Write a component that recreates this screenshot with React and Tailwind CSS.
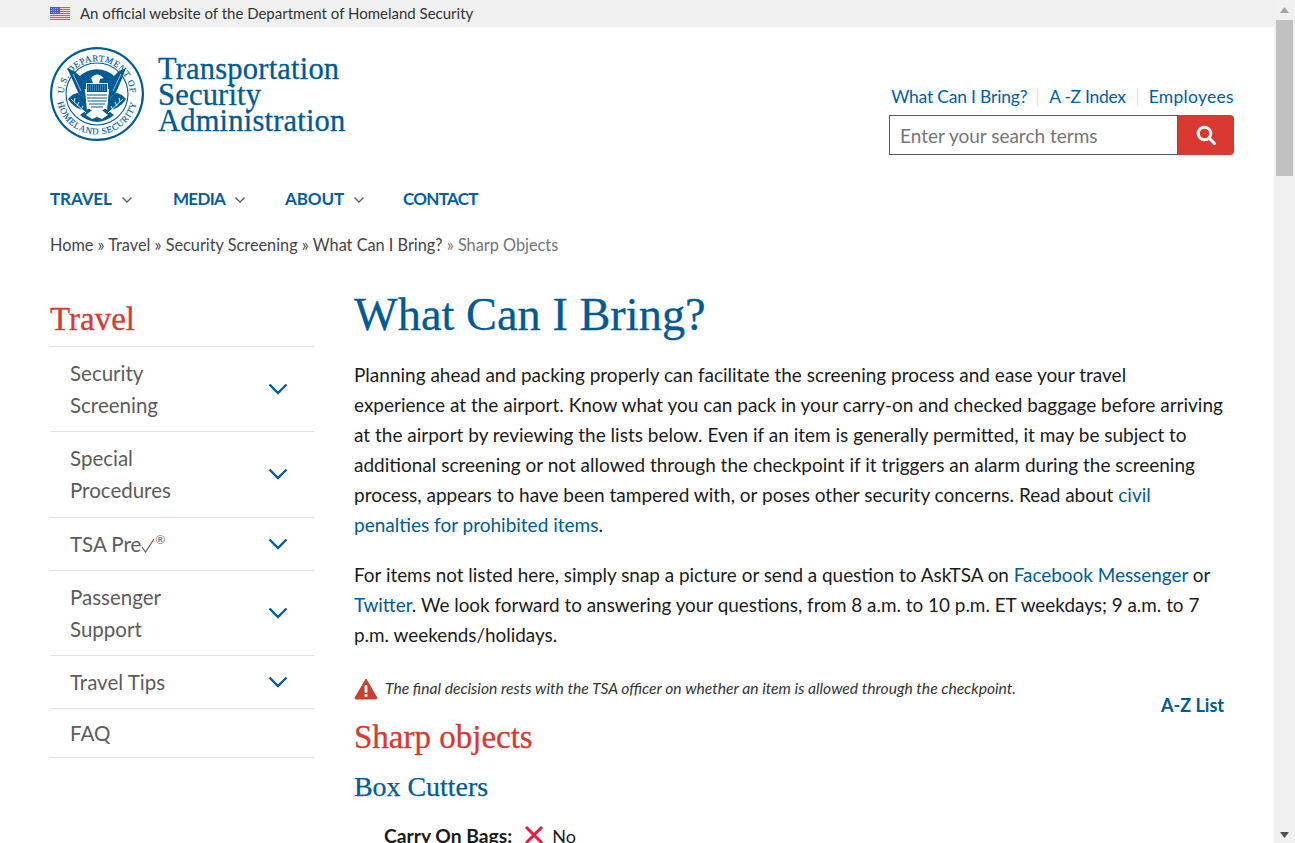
const sideItems = [
  { label: ['Security', 'Screening'], pad: 'py-[10px]' },
  { label: ['Special', 'Procedures'], pad: 'pt-[10px] pb-[11px]' },
  { label: ['TSA Pre'], pre: true, pad: 'py-[10px]' },
  { label: ['Passenger', 'Support'], pad: 'py-[10px]' },
  { label: ['Travel Tips'], pad: 'py-[10px]' },
  { label: ['FAQ'], noArrow: true, pad: 'py-[8px]' },
];

function Flag() {
  return (
    <svg width="20" height="13" viewBox="0 0 20 13" className="shrink-0">
      <rect width="20" height="13" fill="#f4d6d2" />
      {[0, 2, 4, 6, 8, 10, 12].map((y) => (
        <rect key={y} y={y} width="20" height="1" fill="#e0574c" />
      ))}
      <rect width="10" height="7" fill="#4a5cc0" />
      <path d="M1 1.5 H9 M1 3.5 H9 M1 5.5 H9" stroke="#c5cbee" strokeWidth="0.7" strokeDasharray="1 1" />
    </svg>
  );
}

function Seal() {
  return (
    <svg width="94" height="94" viewBox="0 0 94 94" className="shrink-0">
      <defs>
        <path id="sealTop" d="M 14.5 53 A 33 33 0 1 1 79.5 53" fill="none" />
        <path id="sealBottom" d="M 6.5 47 A 40.5 40.5 0 0 0 87.5 47" fill="none" />
      </defs>
      <circle cx="47" cy="47" r="47" fill="#005b94" />
      <circle cx="47" cy="47" r="44.8" fill="#fff" />
      <circle cx="47" cy="47" r="31" fill="none" stroke="#005b94" strokeWidth="1.1" />
      <text fontSize="9" fill="#005b94" stroke="#005b94" strokeWidth="0.15" fontFamily="'Liberation Serif', serif" letterSpacing="0.6" textAnchor="middle">
        <textPath href="#sealTop" startOffset="50%">U.S. DEPARTMENT OF</textPath>
      </text>
      <text fontSize="9" fill="#005b94" stroke="#005b94" strokeWidth="0.15" fontFamily="'Liberation Serif', serif" letterSpacing="0.7" textAnchor="middle">
        <textPath href="#sealBottom" startOffset="50%">HOMELAND SECURITY</textPath>
      </text>
      {/* blue field behind the eagle */}
      <path d="M29 30 A25 25 0 0 1 65 30 L62 42 H32 Z" fill="#005b94" />
      {/* wings */}
      <path d="M17 21 L24 24 L30 29 L34 36 L36 52 L29 47 L26 41 L23 34 Z" fill="#005b94" />
      <path d="M76 21 L69 24 L64 29 L60 36 L58 52 L65 47 L68 41 L71 34 Z" fill="#005b94" />
      <path d="M23 27 L31 44" stroke="#fff" strokeWidth="0.6" />
      <path d="M71 27 L63 44" stroke="#fff" strokeWidth="0.6" />
      {/* lower disk */}
      <path d="M18 52 Q23 46 28 46 L36 52 L37 65 L32 63 Q23 60 18 52 Z" fill="#005b94" />
      <path d="M76 52 Q71 46 66 46 L58 52 L57 65 L62 63 Q71 60 76 52 Z" fill="#005b94" />
      <path d="M30 68 Q47 82 64 68 L56 62 L38 62 Z" fill="#005b94" />
      {/* head */}
      <path d="M41 31 Q45 26 50 28 L54 31 L50 32 L49 36 L43 36 Z" fill="#fff" />
      {/* shield */}
      <path d="M36 36 H58 V53 Q58 62 47 67 Q36 62 36 53 Z" fill="#fff" />
      <rect x="37" y="37" width="20" height="8" fill="#005b94" />
      <path d="M38 39 H56 M38 41 H56 M38 43 H56" stroke="#fff" strokeWidth="0.5" strokeDasharray="1 1" />
      <path d="M37 48 H57 M37 51 H57 M37.5 54 H56.5 M39 57 H55 M41 60 H53" stroke="#005b94" strokeWidth="1.2" fill="none" />
      {/* olive branch and arrows */}
      <path d="M21 52 L36 66 M25 51 l-1 4 M29 55 l-2 4 M33 59 l-2 4" stroke="#fff" strokeWidth="0.9" fill="none" />
      <path d="M73 52 L58 66 M69 51 l1 4 M65 55 l2 4 M61 59 l2 4" stroke="#fff" strokeWidth="0.9" fill="none" />
      <path d="M36 68 L41 64 H53 L58 68 L52 72 L47 70 L42 72 Z" fill="#fff" />
    </svg>
  );
}

function Warning() {
  return (
    <svg width="24" height="22" viewBox="0 0 24 22" className="shrink-0">
      <path d="M12 1 L23 20 Q23 21 22 21 H2 Q1 21 1 20 Z" fill="#c9402f" stroke="#c9402f" strokeLinejoin="round" />
      <rect x="10.6" y="7" width="2.8" height="8" rx="1" fill="#fff" />
      <rect x="10.6" y="16" width="2.8" height="2.8" fill="#fff" />
    </svg>
  );
}

function Scrollbar() {
  return (
    <aside className="w-[21px] h-full shrink-0 bg-[#f1f1f1] flex flex-col items-stretch">
      <div className="h-[20px] flex items-center justify-center">
        <svg width="9" height="6" viewBox="0 0 9 6"><path d="M4.5 0 L9 6 H0 Z" fill="#a3a3a3" /></svg>
      </div>
      <div className="h-[156px] mx-[2px] bg-[#c1c1c1]" />
      <div className="flex-1" />
      <div className="h-[17px] flex items-center justify-center">
        <svg width="9" height="6" viewBox="0 0 9 6"><path d="M4.5 6 L9 0 H0 Z" fill="#505050" /></svg>
      </div>
    </aside>
  );
}

function NavItem({ label, arrow, tight }) {
  return (
    <a className={`flex items-center text-[17px] font-bold text-[#005ea2] ${tight ? 'tracking-[-0.7px]' : 'tracking-[-0.1px]'}`}>
      {label}
      {arrow && (
        <svg width="10" height="6" viewBox="0 0 10 6" fill="none" stroke="#5c5c5c" strokeWidth="1.3" className="ml-[10px] mt-[1px]">
          <path d="M0.5 0.5 L5 5 L9.5 0.5" />
        </svg>
      )}
    </a>
  );
}

export default function App() {
  return (
    <div className="flex h-screen overflow-hidden bg-white font-['Lato','Noto_Sans',sans-serif] text-[#1b1b1b]">
      <div className="flex-1 min-w-0 overflow-hidden">
        {/* Official banner */}
        <div className="h-[27px] bg-[#f0f0f0] flex items-center pl-[50px] gap-[10px] text-[15px] text-[#333]">
          <Flag />
          <span>An official website of the Department of Homeland Security</span>
        </div>

        {/* Header */}
        <header className="pl-[50px] pr-[40px] pt-[20px] flex justify-between">
          <div className="flex items-start gap-[14px]">
            <Seal />
            <div className="font-['Liberation_Serif',serif] text-[30.5px] leading-[26px] text-[#005b94] pt-[9px] tracking-[0.2px] [-webkit-text-stroke:0.3px_#005b94]">
              <div>Transportation</div>
              <div>Security</div>
              <div>Administration</div>
            </div>
          </div>
          <div className="flex flex-col items-end pt-[38px]">
            <div className="flex items-center text-[17.5px] leading-[24px] text-[#005ea2]">
              <a className="tracking-[-0.2px]">What Can I Bring?</a>
              <span className="w-px h-[18px] bg-[#dfe1e2] ml-[10px] mr-[11px]" />
              <a className="tracking-[-0.3px]">A -Z Index</a>
              <span className="w-px h-[18px] bg-[#dfe1e2] mx-[11px]" />
              <a className="tracking-[0.3px]">Employees</a>
            </div>
            <div className="flex mt-[6px] w-[345px] h-[40px]">
              <div className="flex-1 border border-[#565c65] flex items-center pl-[10px] pt-[2px] text-[19px] text-[#757575]">Enter your search terms</div>
              <button className="w-[56px] bg-[#d83933] rounded-r-[4px] flex items-center justify-center">
                <svg width="20" height="20" viewBox="0 0 20 20" fill="none" stroke="#fff" strokeWidth="3">
                  <circle cx="8.5" cy="8.5" r="6.3" />
                  <path d="M13 13 L18.5 18.5" strokeLinecap="round" />
                </svg>
              </button>
            </div>
          </div>
        </header>

        {/* Main nav */}
        <nav className="pl-[50px] mt-[32px] h-[24px] flex items-center">
          <div className="w-[123px]"><NavItem label="TRAVEL" arrow /></div>
          <div className="w-[112px]"><NavItem label="MEDIA" arrow tight /></div>
          <div className="w-[118px]"><NavItem label="ABOUT" arrow /></div>
          <NavItem label="CONTACT" tight />
        </nav>

        {/* Breadcrumb */}
        <div className="pl-[50px] mt-[22px] h-[24px] flex items-center text-[16.3px] text-[#454545] whitespace-pre">
          <span>Home » Travel » Security Screening » What Can I Bring? </span>
          <span className="text-[#757575]">» Sharp Objects</span>
        </div>

        <div className="flex pl-[50px] pr-[40px] mt-[30px]">
          {/* Sidebar */}
          <aside className="w-[264px] shrink-0">
            <h2 className="font-['Liberation_Serif',serif] text-[33px] leading-[44px] text-[#d83933] h-[59px] pt-[10px] [-webkit-text-stroke:0.3px_#d83933]">Travel</h2>
            <ul className="border-t border-[#dfe1e2]">
              {sideItems.map((item) => (
                <li key={item.label[0]} className={`border-b border-[#dfe1e2] flex items-center justify-between pl-[20px] pr-[25px] text-[20.5px] leading-[32px] text-[#5c5c5c] ${item.pad}`}>
                  <div>
                    {item.label.map((line) => (
                      <div key={line} className="flex items-start">
                        {line}
                        {item.pre && (
                          <>
                            <svg width="14" height="16" viewBox="0 0 14 16" fill="none" stroke="#5c5c5c" strokeWidth="1.2" className="mt-[10px]">
                              <path d="M1 9 L4.5 14 L13 1" />
                            </svg>
                            <span className="text-[12px] leading-[24px]">®</span>
                          </>
                        )}
                      </div>
                    ))}
                  </div>
                  {!item.noArrow && (
                    <svg width="20" height="12" viewBox="0 0 20 12" fill="none" stroke="#005ea2" strokeWidth="2.4" className="shrink-0 mr-[1px]">
                      <path d="M1.5 1.5 L10 10 L18.5 1.5" />
                    </svg>
                  )}
                </li>
              ))}
            </ul>
          </aside>

          {/* Content */}
          <main className="flex-1 min-w-0 ml-[40px]">
            <h1 className="font-['Liberation_Serif',serif] text-[46.4px] leading-[56px] text-[#005b94] [-webkit-text-stroke:0.3px_#005b94]">What Can I Bring?</h1>
            <p className="mt-[17px] whitespace-nowrap text-[19px] leading-[30px] text-[#1b1b1b]">
              Planning ahead and packing properly can facilitate the screening process and ease your travel<br />
              experience at the airport. Know what you can pack in your carry-on and checked baggage before arriving<br />
              at the airport by reviewing the lists below. Even if an item is generally permitted, it may be subject to<br />
              additional screening or not allowed through the checkpoint if it triggers an alarm during the screening<br />
              process, appears to have been tampered with, or poses other security concerns. Read about <a className="text-[#005b94]">civil</a><br />
              <a className="text-[#005b94]">penalties for prohibited items</a>.
            </p>
            <p className="mt-[20px] whitespace-nowrap text-[18.9px] leading-[30px] text-[#1b1b1b]">
              For items not listed here, simply snap a picture or send a question to AskTSA on <a className="text-[#005b94]">Facebook Messenger</a> or<br />
              <a className="text-[#005b94]">Twitter</a>. We look forward to answering your questions, from 8 a.m. to 10 p.m. ET weekdays; 9 a.m. to 7<br />
              p.m. weekends/holidays.
            </p>
            <div className="mt-[24px] flex items-center gap-[7px] h-[30px] text-[15.65px] italic text-[#333]">
              <Warning />
              <span>The final decision rests with the TSA officer on whether an item is allowed through the checkpoint.</span>
            </div>
            <div className="flex justify-between items-start">
              <h2 className="font-['Liberation_Serif',serif] text-[33px] leading-[40px] text-[#d83933] mt-[13px] [-webkit-text-stroke:0.3px_#d83933]">Sharp objects</h2>
              <a className="text-[18px] font-bold text-[#005b94] mr-[10px] mt-[-12px]">A-Z List</a>
            </div>
            <h3 className="font-['Liberation_Serif',serif] text-[27.9px] leading-[32px] text-[#005b94] mt-[14px] [-webkit-text-stroke:0.25px_#005b94]">Box Cutters</h3>
            <div className="mt-[18px] pl-[30px] flex items-center text-[18px] leading-[30px]">
              <b className="text-[#1b1b1b] text-[19.3px] whitespace-nowrap">Carry On Bags:</b>
              <svg width="20" height="20" viewBox="0 0 20 20" className="ml-[12px] mr-[8px] mt-[-2px]">
                <path d="M2 2 L18 18 M18 2 L2 18" stroke="#e31c3d" strokeWidth="3" />
              </svg>
              <span>No</span>
            </div>
          </main>
        </div>
      </div>
      <Scrollbar />
    </div>
  );
}
